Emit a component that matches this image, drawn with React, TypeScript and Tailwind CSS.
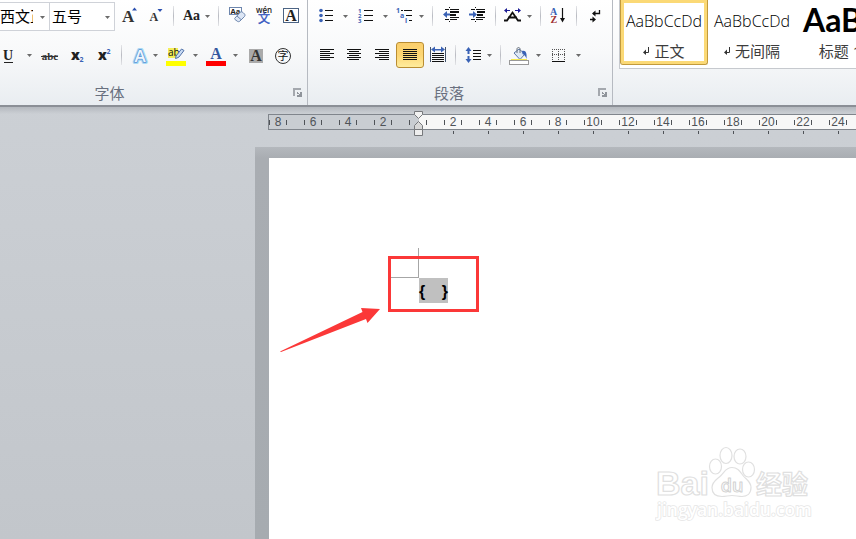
import type { ReactNode } from "react";
import clsx from "clsx";

const INK = "#111111";
const BLUE = "#3a62b5";
const SERIF = "'Liberation Serif', serif";
const SANS = "'Open Sans', 'Noto Sans CJK SC', sans-serif";

function Icon({ children }: { children: ReactNode }) {
  return (
    <svg viewBox="0 0 20 20" className="h-5 w-5 shrink-0 overflow-visible" fill="none" aria-hidden="true">
      {children}
    </svg>
  );
}

// rows are [x, y, width], each one pixel high
function Lines({ rows }: { rows: number[][] }) {
  return (
    <g fill={INK} shapeRendering="crispEdges">
      {rows.map(([x, y, w]) => (
        <rect key={`${x}-${y}`} x={x} y={y} width={w} height={1} />
      ))}
    </g>
  );
}

function Caret() {
  return (
    <svg viewBox="0 0 5 3" className="h-[3px] w-[5px] shrink-0" aria-hidden="true">
      <path d="M0 0h5L2.5 3z" fill="#6b6b6b" />
    </svg>
  );
}

function Tool({ label, active, wide, children }: { label: string; active?: boolean; wide?: boolean; children: ReactNode }) {
  return (
    <button
      type="button"
      aria-label={label}
      aria-pressed={active}
      className={clsx(
        "flex h-[26px] shrink-0 items-center justify-center",
        wide ? "w-7" : "w-[27px]",
        active && "rounded-[3px] border border-[#b98d32] bg-gradient-to-b from-[#fbcf6c] via-[#fdd673] to-[#ffec9c]",
      )}
    >
      <Icon>{children}</Icon>
    </button>
  );
}

function SplitTool({ label, narrow, children }: { label: string; narrow?: boolean; children: ReactNode }) {
  return (
    <button
      type="button"
      aria-label={label}
      aria-haspopup="menu"
      className={clsx("flex h-[26px] shrink-0 items-center justify-between px-1", narrow ? "w-9" : "w-10")}
    >
      <Icon>{children}</Icon>
      <Caret />
    </button>
  );
}

function Sep() {
  return <span className="mx-1 h-5 w-px shrink-0 bg-gradient-to-b from-[#e4e5e8] via-[#b9bbc2] to-[#e4e5e8]" />;
}

function GroupLabel({ children, className }: { children: string; className: string }) {
  return (
    <div className="flex h-[35px] items-center pt-2.5 pr-[5px]">
      <span className={clsx("flex-1 text-center text-[15px] leading-5 text-[#69707f]", className)}>{children}</span>
      <button type="button" aria-label={`${children}设置`} className="h-[9px] w-[9px]">
        <svg viewBox="0 0 9 9" className="h-[9px] w-[9px]" shapeRendering="crispEdges" aria-hidden="true">
          <path d="M0 0h8v2H2v6H0z" fill="#a4a8ae" />
          <path d="M4 4h1v1h1v1h1V4h2v5H4V7h2V6H4z" fill="#8f949b" />
        </svg>
      </button>
    </div>
  );
}

function FontBox({ label, value, first }: { label: string; value: string; first?: boolean }) {
  return (
    <label
      className={clsx(
        "relative flex h-[29px] shrink-0 items-center border border-l-0 border-[#cfd2d8] bg-white",
        first ? "w-[50px]" : "w-[65px]",
      )}
    >
      <select
        aria-label={label}
        defaultValue={value}
        className={clsx(
          "h-full w-full appearance-none overflow-hidden bg-transparent pr-4 text-[15px] text-black outline-none",
          !first && "pl-0.5",
        )}
      >
        <option>{value}</option>
      </select>
      <span className="pointer-events-none absolute top-1/2 right-1">
        <Caret />
      </span>
    </label>
  );
}

function FontGroup() {
  return (
    <section className="w-[308px] shrink-0 border-r border-[#b6bac1]">
      <div className="flex h-8 items-center">
        <FontBox label="字体" value="西文正文" first />
        <FontBox label="字号" value="五号" />
        <Tool label="增大字体">
          <text x="3" y="16" fontFamily={SERIF} fontWeight="700" fontSize="17" fill="#333">A</text>
          <path d="M13 4.500h5L15.500 1.500z" fill="#2b50b0" />
        </Tool>
        <Tool label="缩小字体">
          <text x="3.500" y="15" fontFamily={SERIF} fontWeight="700" fontSize="12" fill="#333">A</text>
          <path d="M11.500 3h5L14 6z" fill="#2b50b0" />
        </Tool>
        <Sep />
        <SplitTool label="更改大小写" narrow>
          <text x="1" y="14" fontFamily={SERIF} fontWeight="700" fontSize="14" fill="#222">Aa</text>
        </SplitTool>
        <Sep />
        <Tool label="清除格式">
          <rect x="2.500" y="1.500" width="12" height="7" fill="#fff" stroke="#6d86ad" />
          <text x="3.500" y="8" fontFamily={SANS} fontWeight="700" fontSize="7.500" fill="#222">Aa</text>
          <path d="M8 12l5-5.500c1-1 2-.8 3 0l1.500 1.500c.8.900.6 1.700 0 2.500L13 15c-1 1-2.200.8-3 0l-2-1.500c-.6-.5-.6-1 0-1.500z" fill="#dce6f5" stroke="#6d86ad" />
          <path d="M10 10l4 3.500" stroke="#6d86ad" />
        </Tool>
        <Tool label="拼音指南">
          <text x="10" y="7" textAnchor="middle" fontFamily={SANS} fontWeight="600" fontSize="8" fill="#222">wén</text>
          <text x="10" y="17" textAnchor="middle" fontFamily="'Noto Sans CJK SC', sans-serif" fontSize="12" fill="#3457c0" stroke="#3457c0" strokeWidth=".4">文</text>
        </Tool>
        <Tool label="字符边框">
          <rect x="2.500" y="2.500" width="15" height="14" fill="#fff" stroke="#4c6484" />
          <text x="10" y="15" textAnchor="middle" fontFamily={SERIF} fontWeight="700" fontSize="16" fill="#222">A</text>
        </Tool>
      </div>
      <div className="mt-2 flex h-[30px] items-center">
        <SplitTool label="下划线" narrow>
          <text x="-1" y="15" fontFamily={SERIF} fontWeight="700" fontSize="14" fill="#222">U</text>
          <path d="M0 17.500h9" stroke="#222" />
        </SplitTool>
        <Tool label="删除线">
          <text x="10" y="15" textAnchor="middle" fontFamily={SERIF} fontWeight="700" fontSize="11" fill="#333">abc</text>
          <path d="M1 11.500h17" stroke="#333" />
        </Tool>
        <Tool label="下标">
          <text x="4" y="15" fontFamily={SANS} fontWeight="800" fontSize="14" fill="#222">x</text>
          <text x="12.500" y="17" fontFamily={SANS} fontWeight="700" fontSize="7" fill={BLUE}>2</text>
        </Tool>
        <Tool label="上标">
          <text x="4" y="15" fontFamily={SANS} fontWeight="800" fontSize="14" fill="#222">x</text>
          <text x="12.500" y="9" fontFamily={SANS} fontWeight="700" fontSize="7" fill={BLUE}>2</text>
        </Tool>
        <Sep />
        <SplitTool label="文本效果" narrow>
          <g fontFamily={SANS} fontWeight="600" fontSize="17" textAnchor="middle" strokeLinejoin="round">
            <text x="10" y="17" fill="none" stroke="#a9daf5" strokeWidth="4">A</text>
            <text x="10" y="17" fill="#fff" stroke="#5b92d4" strokeWidth="1.500">A</text>
            <text x="10" y="17" fill="#eef6fd">A</text>
          </g>
        </SplitTool>
        <SplitTool label="突出显示">
          <rect x="2" y="3" width="10" height="10" fill="#f4ee58" />
          <text x="2" y="11" fontFamily={SANS} fontSize="10" fill="#111">ab</text>
          <path d="M11 13l-1.500.5.500-2.500L15.500 4l2.500 1.500L13 12z" fill="#c9dbf3" stroke="#4f70a8" />
          <rect x="0" y="16" width="20" height="5" fill="#ffff00" />
        </SplitTool>
        <SplitTool label="字体颜色">
          <text x="10" y="14" textAnchor="middle" fontFamily={SERIF} fontWeight="700" fontSize="16" fill="#34579f">A</text>
          <rect x="0" y="16" width="20" height="5" fill="#ff0000" />
        </SplitTool>
        <Tool label="字符底纹">
          <rect x="3" y="4" width="14" height="14" fill="#aaa" />
          <text x="10" y="16" textAnchor="middle" fontFamily={SERIF} fontWeight="700" fontSize="16" fill="#333">A</text>
        </Tool>
        <Tool label="带圈字符">
          <circle cx="10" cy="11" r="7.500" stroke="#333" />
          <text x="10" y="15" textAnchor="middle" fontFamily="'Noto Sans CJK SC', sans-serif" fontSize="11" fill="#111">字</text>
        </Tool>
      </div>
      <GroupLabel className="pr-[74px]">字体</GroupLabel>
    </section>
  );
}

function ParagraphGroup() {
  return (
    <section className="ml-px w-[304px] shrink-0 border-r border-[#b6bac1] pl-[3px]">
      <div className="flex h-8 items-center">
        <SplitTool label="项目符号">
          {[4, 9, 14].map((y) => (
            <circle key={y} cx="5" cy={y + 0.5} r="1.800" fill={BLUE} />
          ))}
          <Lines rows={[[9, 4, 8], [9, 9, 8], [9, 14, 8]]} />
        </SplitTool>
        <SplitTool label="编号">
          {[1, 2, 3].map((n) => (
            <text key={n} x="2" y={n * 5 + 2} fontFamily={SANS} fontWeight="700" fontSize="6" fill={BLUE}>{n}</text>
          ))}
          <Lines rows={[[8, 4, 9], [8, 9, 9], [8, 14, 9]]} />
        </SplitTool>
        <SplitTool label="多级列表" narrow>
          <g fontFamily={SANS} fontWeight="700" fontSize="7" fill={BLUE}>
            <text x="0" y="7">1</text>
            <text x="4" y="12">a</text>
            <text x="9" y="17">i</text>
          </g>
          <Lines rows={[[5, 4, 2], [8, 4, 8], [10, 9, 6], [13, 14, 3]]} />
        </SplitTool>
        <Sep />
        <Tool label="减少缩进量">
          <Lines rows={[[4, 3, 4], [9, 3, 9], [9, 11, 9], [4, 13, 4], [9, 13, 7], [8, 1, 1], [8, 15, 1]]} />
          <rect x="9" y="5" width="9" height="2" fill={INK} />
          <rect x="9" y="8" width="6" height="2" fill={INK} />
          <path d="M2 8.500L6 5v2.500h3v2H6V12z" fill={BLUE} />
        </Tool>
        <Tool label="增加缩进量">
          <Lines rows={[[3, 3, 4], [8, 3, 9], [8, 11, 9], [3, 13, 4], [8, 13, 7], [7, 1, 1], [7, 15, 1]]} />
          <rect x="9" y="5" width="8" height="2" fill={INK} />
          <rect x="9" y="8" width="6" height="2" fill={INK} />
          <path d="M9 8.500L5 5v2.500H1v2h4V12z" fill={BLUE} />
        </Tool>
        <Sep />
        <SplitTool label="中文版式" narrow>
          <path d="M0 14.500h3l5.500-8 5.500 8h3M4 11.500h9" stroke="#111" strokeWidth="1.800" />
          <path d="M0 4.500L3 2v2h3v1H3v2zM17 4.500L14 2v2h-3v1h3v2z" fill="#1d1d94" />
        </SplitTool>
        <Sep />
        <Tool label="排序">
          <text x="1" y="9" fontFamily={SERIF} fontWeight="700" fontSize="10" fill={BLUE}>A</text>
          <text x="1.500" y="17" fontFamily={SERIF} fontWeight="700" fontSize="10" fill="#a03030">Z</text>
          <path d="M13.500 2v12" stroke="#111" strokeWidth="1.200" />
          <path d="M11 12h5l-2.500 4.500z" fill="#111" />
        </Tool>
        <Sep />
        <Tool label="显示编辑标记">
          <path d="M14.500 4v3.500H8M5 13.500h4" stroke="#111" strokeWidth="1.300" />
          <path d="M7 7.500L10.500 4.500v6zM11 13.500L7.500 10.500v6z" fill="#111" />
        </Tool>
      </div>
      <div className="mt-2 flex h-[30px] items-center">
        <Tool label="左对齐" wide>
          <Lines rows={[[4, 4, 14], [4, 6, 10], [4, 8, 14], [4, 10, 10], [4, 12, 14], [4, 14, 10]]} />
        </Tool>
        <Tool label="居中" wide>
          <Lines rows={[[3, 4, 14], [5, 6, 10], [3, 8, 14], [5, 10, 10], [3, 12, 14], [5, 14, 10]]} />
        </Tool>
        <Tool label="右对齐" wide>
          <Lines rows={[[3, 4, 14], [7, 6, 10], [3, 8, 14], [7, 10, 10], [3, 12, 14], [7, 14, 10]]} />
        </Tool>
        <Tool label="两端对齐" active wide>
          <Lines rows={[[3, 4, 14], [3, 6, 14], [3, 8, 14], [3, 10, 14], [3, 12, 14], [3, 14, 14]]} />
        </Tool>
        <Tool label="分散对齐">
          <path d="M2 2v15M17 2v15" stroke="#44546c" shapeRendering="crispEdges" />
          <path d="M3 4.500L7 1.500v2.500h6V1.500l4 3-4 3V5.500H7v2z" fill={BLUE} />
          <Lines rows={[[4, 8, 12], [4, 10, 12], [4, 12, 12], [4, 14, 12], [4, 16, 12]]} />
        </Tool>
        <Sep />
        <SplitTool label="行距" narrow>
          <path d="M4.500 2L7.500 6H5.500v3h-2V6h-2zM4.500 18L7.500 14H5.500v-3h-2v3h-2z" fill={BLUE} />
          <Lines rows={[[9, 5, 8], [9, 8, 8], [9, 11, 8], [9, 14, 8]]} />
        </SplitTool>
        <Sep />
        <SplitTool label="底纹">
          <path d="M5 8l5-4 6 5-5 5.500z" fill="#dfe9f6" stroke="#5b77a6" />
          <path d="M8 8V4c0-2 3-2 3 0v4" stroke="#68707c" />
          <path d="M13 6c4-1 5 2 4.500 8-1-3-2-4-4-5z" fill={BLUE} />
          <path d="M2 14.500h16" stroke="#f4e84c" />
          <rect x=".5" y="15.500" width="19" height="4" fill="#fff" stroke="#999" />
        </SplitTool>
        <SplitTool label="框线">
          <path d="M3.500 4v11M9.500 4v11M15.500 4v11M3 4.500h13M3 9.500h13" stroke="#555" strokeDasharray="1 1" shapeRendering="crispEdges" />
          <Lines rows={[[3, 16, 13]]} />
        </SplitTool>
      </div>
      <GroupLabel className="pr-3">段落</GroupLabel>
    </section>
  );
}

const styleCards = [
  { name: "正文", mark: true, sample: "AaBbCcDd", selected: true },
  { name: "无间隔", mark: true, sample: "AaBbCcDd" },
  { name: "标题 1", sample: "AaBb", heading: true },
];

function StylesGroup() {
  return (
    <section className="ml-px min-w-0 flex-1 overflow-hidden pl-[5px]">
      <div className="flex h-[69px] items-start overflow-hidden border-b border-l border-[#c6c9ce] bg-white">
        {styleCards.map((card) => (
          <button
            key={card.name}
            type="button"
            aria-pressed={!!card.selected}
            className={clsx(
              "flex h-[65px] w-[88px] shrink-0 flex-col items-center",
              card.selected && "rounded-b-[3px] border border-t-0 border-[#c29a3c] shadow-[inset_0_0_0_3px_#fbd976]",
            )}
          >
            <span
              className={clsx(
                "flex h-10 items-center whitespace-nowrap text-black",
                card.heading ? "self-start pl-[7px] font-['Lato'] text-[32px] font-bold" : "pt-px font-['Open_Sans'] text-base font-light",
              )}
            >
              {card.sample}
            </span>
            <span className="flex h-[22px] items-center gap-1 text-[15px] whitespace-nowrap text-[#3c3c3c]">
              {card.mark && (
                <svg viewBox="0 0 7 8" className="h-2 w-[7px]" aria-hidden="true">
                  <path d="M5.500 0v5.500H2" fill="none" stroke="#333" />
                  <path d="M0 5.500L3 2.500v5.500z" fill="#333" />
                </svg>
              )}
              {card.name}
            </span>
          </button>
        ))}
      </div>
    </section>
  );
}

const rulerMarks = ["8", "6", "4", "2", "", "2", "4", "6", "8", "10", "12", "14", "16", "18", "20", "22", "24", "26"];

function Ruler() {
  return (
    <div className="relative ml-[268px]">
      <div className="flex h-4 items-center gap-[17px] overflow-hidden border border-r-0 border-[#80858c] bg-linear-[90deg,#c9cdd2_150px,#f7f7f7_150px]">
        {rulerMarks.map((mark, i) => (
          <span key={i} className="flex w-[18px] shrink-0 items-center justify-between">
            <i className="h-[5px] w-px bg-[#4f5358]" />
            <span className="flex w-4 justify-center font-['Liberation_Sans'] text-xs text-[#4f5358]">{mark}</span>
            <i className="h-[5px] w-px bg-[#4f5358]" />
          </span>
        ))}
      </div>
      <div className="mt-px flex h-[3px] gap-[34px] overflow-hidden pl-[185px]">
        {rulerMarks.slice(5).map((mark) => (
          <i key={mark} className="w-px shrink-0 bg-[#4f5358]" />
        ))}
      </div>
      <svg viewBox="0 0 9 25" className="absolute -top-[3px] left-[146px] h-[25px] w-[9px]" aria-hidden="true">
        <path d="M.5.5h8v3l-4 4-4-4z" fill="#f2f2f2" stroke="#77797c" />
        <path d="M4.500 10.500l4 4v4h-8v-4z" fill="#d8d8d8" stroke="#77797c" />
        <path d="M.5 18.500h8v6h-8z" fill="#eeeeee" stroke="#77797c" />
      </svg>
    </div>
  );
}

function Watermark() {
  return (
    <svg viewBox="0 0 160 80" className="absolute right-[41px] bottom-[14px] h-20 w-40" role="img" aria-label="Baidu经验">
      <g fill="#fff" stroke="#e0e0e0" strokeWidth="1.200" strokeLinejoin="round">
        <text x="1" y="50" fontFamily="'Liberation Sans', sans-serif" fontWeight="700" fontSize="34">Bai</text>
        <ellipse cx="60.500" cy="21.500" rx="6" ry="7.500" />
        <ellipse cx="71" cy="10.500" rx="6" ry="8" />
        <ellipse cx="85" cy="11.500" rx="6" ry="7.500" />
        <ellipse cx="93.500" cy="24.500" rx="6" ry="7.500" />
        <path d="M77 22.500c6 0 8 4 11 8s8 6 8 12-4 9-9 9c-4 0-6-1-10-1s-6 1-10 1c-6 0-10-3-10-9s5-8 9-12 5-8 11-8z" />
        <text x="77" y="47" textAnchor="middle" fontFamily="'Open Sans', sans-serif" fontWeight="600" fontSize="18" strokeWidth="1" stroke="#d2d2d2">du</text>
        <text x="101" y="49" fontFamily="'Noto Sans CJK SC', sans-serif" fontWeight="700" fontSize="26">经验</text>
      </g>
      <text x="2" y="71" fontFamily="'Open Sans', sans-serif" fontWeight="600" fontSize="17.500" fill="#fff" stroke="#e6e6e6" strokeWidth="1.500" style={{ paintOrder: "stroke" }}>
        jingyan.baidu.com
      </text>
    </svg>
  );
}

function Page() {
  return (
    <main className="mt-[13px] ml-[255px] flex flex-1 flex-col bg-gradient-to-b from-[#b4b8bd] via-[#a9adb2] via-[11px] to-[#a6abb0] pt-[11px] pl-3.5">
      <div className="relative flex-1 overflow-hidden bg-white pt-[120px] pl-[150px]">
        <p className="relative flex h-[25px] w-[29px] items-end justify-between bg-[#c0c0c0] font-['Liberation_Sans'] text-base leading-[22px] font-bold text-black">
          <span className="absolute -top-[30px] -left-7 h-[30px] w-7 border-r border-b border-[#a6a6a6]" />
          <span>{"{"}</span>
          <span>{"}"}</span>
          <span className="absolute -top-[22px] -left-[31px] h-14 w-[91px] border-3 border-[#fb3838]" />
        </p>
        <svg viewBox="0 0 102 46" className="absolute top-[149px] left-[10px] h-[46px] w-[102px]" aria-hidden="true">
          <path d="M1 44.500L83.500 5 82 1l19 1-12.500 14-1.500-4L2 45z" fill="#fb3838" />
        </svg>
        <Watermark />
      </div>
    </main>
  );
}

export default function App() {
  return (
    <div className="flex min-h-screen flex-col overflow-hidden bg-gradient-to-b from-[#ced2d7] to-[#c2c6cb] font-['Open_Sans','Noto_Sans_CJK_SC',sans-serif]">
      <header className="flex border-b-2 border-[#8b8f96] bg-gradient-to-b from-white via-[#f8f9fa] to-[#e9edf1]">
        <FontGroup />
        <ParagraphGroup />
        <StylesGroup />
      </header>
      <div className="h-[7px] bg-gradient-to-b from-[#b4b8be] to-transparent" />
      <Ruler />
      <Page />
    </div>
  );
}
